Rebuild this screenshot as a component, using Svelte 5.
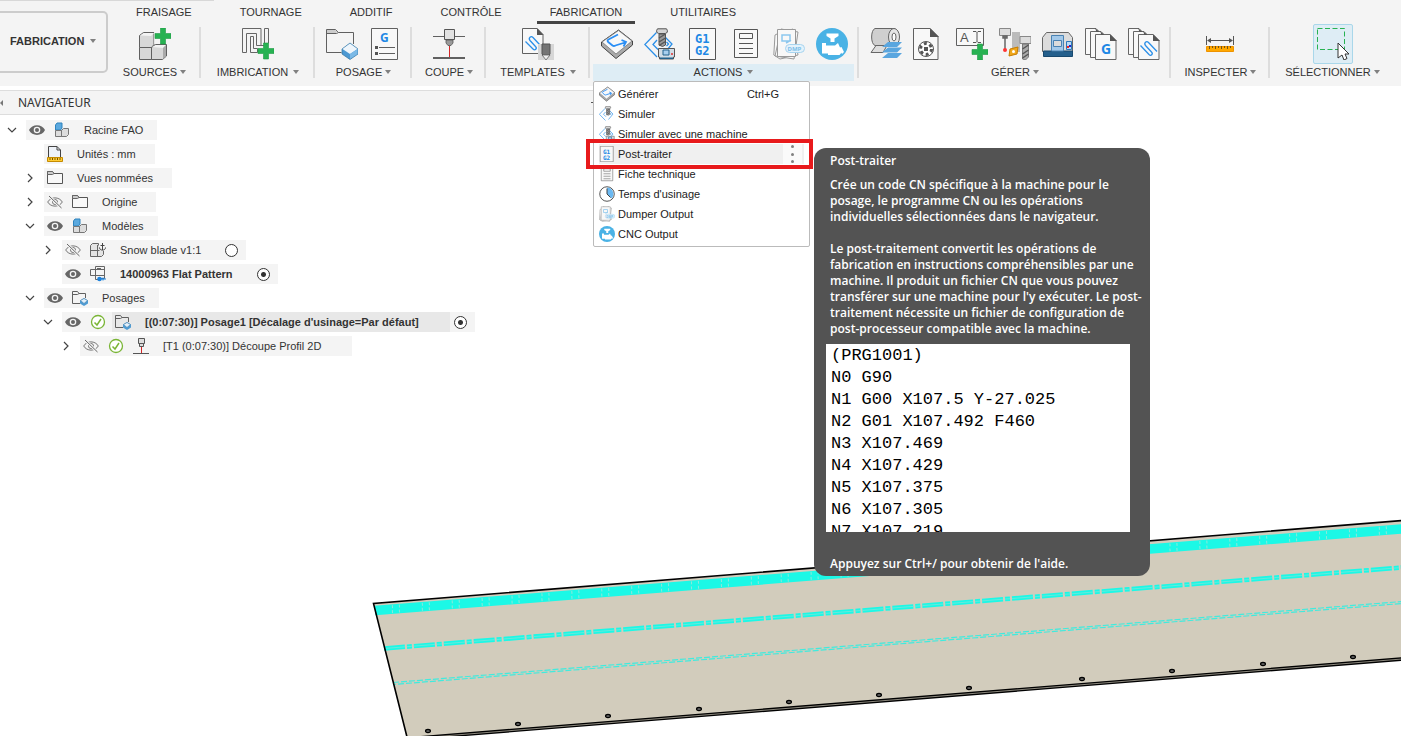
<script>
   let tabs = ['FRAISAGE', 'TOURNAGE', 'ADDITIF', 'CONTRÔLE', 'FABRICATION', 'UTILITAIRES'];
   let activeTab = $state('FABRICATION');

   let panels = [
      { label: 'SOURCES', icons: ['sources'] },
      { label: 'IMBRICATION', icons: ['nesting'], wide: true },
      { label: 'POSAGE', icons: ['setup', 'program'] },
      { label: 'COUPE', icons: ['cut'] },
      { label: 'TEMPLATES', icons: ['template'], wide: true },
      { label: 'ACTIONS', icons: ['generate', 'simulate-machine', 'post', 'sheet', 'dumper', 'cnc'], open: true, wide: true },
      { label: 'GÉRER', icons: ['material', 'wheel', 'rename', 'tools', 'machine', 'stack-g', 'stack-clip'] },
      { label: 'INSPECTER', icons: ['measure'] },
      { label: 'SÉLECTIONNER', icons: ['select'], selected: true }
   ];

   let menuItems = [
      { label: 'Générer', icon: 'generate', shortcut: 'Ctrl+G' },
      { label: 'Simuler', icon: 'simulate' },
      { label: 'Simuler avec une machine', icon: 'simulate-machine' },
      { label: 'Post-traiter', icon: 'post', current: true },
      { label: 'Fiche technique', icon: 'sheet' },
      { label: "Temps d'usinage", icon: 'clock' },
      { label: 'Dumper Output', icon: 'dumper' },
      { label: 'CNC Output', icon: 'cnc' }
   ];

   let rows = [
      { level: 0, chevron: 'down', icons: ['eye', 'model'], label: 'Racine FAO' },
      { level: 1, icons: ['units'], label: 'Unités : mm', roomy: true },
      { level: 1, chevron: 'right', icons: ['folder'], label: 'Vues nommées', roomy: true },
      { level: 1, chevron: 'right', icons: ['eye-off', 'folder'], label: 'Origine', roomy: true },
      { level: 1, chevron: 'down', icons: ['eye', 'model'], label: 'Modèles' },
      { level: 2, chevron: 'right', icons: ['eye-off', 'anchor'], label: 'Snow blade v1:1', radio: 'model' },
      { level: 2, icons: ['eye', 'flat'], label: '14000963 Flat Pattern', bold: true, radio: 'model', checked: true },
      { level: 1, chevron: 'down', icons: ['eye', 'setups'], label: 'Posages' },
      { level: 2, chevron: 'down', icons: ['eye', 'check', 'setups'], label: "[(0:07:30)] Posage1 [Décalage d'usinage=Par défaut]", bold: true, radio: 'setup', checked: true, active: true },
      { level: 3, chevron: 'right', icons: ['eye-off', 'check', 'cut-small'], label: '[T1 (0:07:30)] Découpe Profil 2D' }
   ];

   let code = `(PRG1001)
N0 G90
N1 G00 X107.5 Y-27.025
N2 G01 X107.492 F460
N3 X107.469
N4 X107.429
N5 X107.375
N6 X107.305
N7 X107.219`;

   let description = `Crée un code CN spécifique à la machine pour le
posage, le programme CN ou les opérations
individuelles sélectionnées dans le navigateur.

Le post-traitement convertit les opérations de
fabrication en instructions compréhensibles par une
machine. Il produit un fichier CN que vous pouvez
transférer sur une machine pour l'y exécuter. Le post-
traitement nécessite un fichier de configuration de
post-processeur compatible avec la machine.`;

   let holes = [[428, 731], [518, 724], [608, 716], [699, 709], [789, 702], [879, 695], [969, 688], [1082, 679], [1172, 671], [1263, 664], [1353, 657]];
</script>

{#snippet plus(x, y)}
   <path d="M{x - 2.5} {y - 8}h5v5.5h5.5v5h-5.5V{y + 8}h-5v-5.5H{x - 8}v-5h5.5z" fill="#27b252" stroke="#1e9a45" stroke-width=".6" />
{/snippet}

{#snippet mill()}
   <g stroke="#555" stroke-width="1">
      <path d="M13.5 .8h9l.8 1.5v2l-2 1.2h-6.6l-2-1.2v-2z" fill="#d4d4d4" />
      <path d="M15 6h6.5v11l-3 1.5-3.5-1.5z" fill="#999" />
      <path d="M15 10l6.5-4M15 14l6.5-4M15 17.5l6.5-4" stroke-width="1.4" />
   </g>
{/snippet}

{#snippet sheets()}
   <g fill="#f8f8f8" stroke="#666">
      <path d="M6 26.500H.5V.5H11l4 4" />
      <path d="M11 29.500H5.500V3.500H16l4 4" />
      <path d="M10.500 6.500H25l6 6v19H10.500z" />
      <path d="M10 0l4.500 4h-3zM15 3l4.500 4h-3zM25 6l7 7h-7z" fill="#555" stroke="none" />
   </g>
{/snippet}

{#snippet icon(name, size)}
   <svg width={size} height={size} viewBox="0 0 32 32" fill="none" aria-hidden="true">
      {#if name === 'sources'}
         <g stroke="#606060" fill="#d8d8d8" stroke-linejoin="round">
            <path d="M.5 19.500V7.500l4-3H15v12l-2.500 3z" />
            <path d="M.5 19.500h12v12H.5zM12.500 31.500v-12l4-3H27.500v11.500l-4 3.500z" />
            <path d="M1 7.500l4-2.500h10l-3 3z M13 19l4-2h10l-3 3z" fill="#f3f3f3" stroke="none" />
            <path d="M24 20l3-3v11l-3 3z" fill="#aaa" stroke="none" />
         </g>
         <path d="M15 0h17v16H15z" fill="#f4f4f4" opacity=".8" />
         {@render plus(24, 8)}
      {:else if name === 'nesting'}
         <g stroke="#666">
            <path d="M.5 .5h18.500V17.500h-4.500V5.500h-10v19h-4z" />
            <path d="M8.500 24.500V8.500h3v12h4v4zM22.500 17.500V.5h4V15M19 17.500h3.500" />
         </g>
         {@render plus(24, 23)}
      {:else if name === 'setup'}
         <path d="M.5 24.500V1.500h9l3 3h15V16M.5 5.500h10l2-1M.5 24.500h15" stroke="#606060" />
         <path d="M1 2h8.500l2 2-1.500 1H1z" fill="#ccc" />
         <path d="M16 21l8-6 8 6v5l-8 5.500-8-5.500z" fill="#4b98d2" stroke="#31739f" stroke-width=".7" />
         <path d="M16.500 21l7.500-5.500 7.500 5.500-7.500 5z" fill="#eef5fb" />
         <path d="M24 26v5l7.500-5v-5z" fill="#7bb9e6" />
      {:else if name === 'program'}
         <path d="M2.500 .5h26v31h-26z" fill="#f8f8f8" stroke="#606060" />
         <text x="11" y="14" class="glyph" font-size="12">G</text>
         <path d="M6 18h3v3H6zM6 24h3v3H6z" fill="#555" />
         <path d="M10 19.500h16M10 25.500h16" stroke="#606060" />
      {:else if name === 'cut'}
         <path d="M0 8.500h32" stroke="#606060" />
         <path d="M11.500 1.500h10v10h-10z" fill="#e2e2e2" stroke="#555" />
         <path d="M13 12h7v3l-2 2.500h-3L13 15z" fill="#999" stroke="#555" stroke-width=".8" />
         <path d="M16.500 18v11" stroke="#d32626" />
         <path d="M0 30h32" stroke="#606060" stroke-width="2" />
      {:else if name === 'template'}
         <path d="M.5 .5H15l6 6V25.500H.5z" fill="#f8f8f8" stroke="#606060" />
         <path d="M15 0l6.500 7H15z" fill="#555" />
         <path d="M3.500 13.500l7.500 7.500c2 2 4.500-.5 2.500-2.500L8 12.500c-2-2.500 1-5 3-3l6.500 7" stroke="#2b8fe8" stroke-width="1.300" />
         <path d="M16 16h16v16H16z" fill="#d6d6d6" />
         <path d="M20 16h8v10l-4 5-4-5z" fill="#757575" stroke="#555" />
         <path d="M20 27h8l-4 5z" fill="#eee" stroke="#555" stroke-width=".7" />
      {:else if name === 'generate'}
         <path d="M.5 14L17.500 2l14 11v4L15 30.500.5 18z" fill="#aaa" stroke="#444" stroke-linejoin="round" />
         <path d="M1 14L17.500 2.500 31 13 15 26z" fill="#f8f8f8" stroke="#777" stroke-width=".8" />
         <path d="M17 6.500L7.500 11.500c-1.500 1-1 1.800 0 2.800l4 3.200c1 .8 2 .6 3 0l9.500-3M20.500 12l4.500 2-2.500 4.500" stroke="#2b8ff5" stroke-width="1.800" />
      {:else if name === 'simulate' || name === 'simulate-machine'}
         <path d="M12.500 4.500L.8 16.500 13 29M21 9l7 7-9 11" stroke="#2b8fe8" stroke-width="1.300" />
         <path d="M13 12l-4 4.500 5 5M22.500 14l2 2-2 2" stroke="#2b8fe8" stroke-width="1.300" />
         {@render mill()}
         {#if name === 'simulate-machine'}
            <path d="M14.500 20.500h16v8.500h-1v2h-14v-2h-1z" fill="#d2dde6" stroke="#555" />
            <path d="M19 22h6v5h-6z" fill="#a8cfee" stroke="#23628d" />
            <path d="M16 29.500h13V31H16z" fill="#23628d" />
            <circle cx="28" cy="26" r="1" fill="#e03030" />
         {/if}
      {:else if name === 'post'}
         <path d="M2.500 .5h26v31h-26z" fill="#f8f8f8" stroke="#555" />
         <text x="8" y="15" class="glyph mono" font-size="12">G1</text>
         <text x="8" y="27" class="glyph mono" font-size="12">G2</text>
      {:else if name === 'sheet'}
         <path d="M4.500 1.500h23v28h-23z" fill="#f8f8f8" stroke="#555" />
         <path d="M9.500 5.500h13v5h-13zM9 15.500h14M9 20.500h14M9 25.500h14" stroke="#555" />
      {:else if name === 'dumper'}
         <g fill="#f8f8f8" stroke="#999">
            <path d="M2 7l3-1.500L20 1l5 26L7 31 .8 27z" />
            <path d="M8 1l17 3-4 27-19-3z" />
            <path d="M4.500 1.500h18v27h-18z" />
         </g>
         <path d="M9 7h8v6H9zM13 15l5-3" stroke="#8cc7ee" stroke-width="1.500" />
         <rect x="12.500" y="16.500" width="19" height="8" rx="4" fill="#e4f2fb" stroke="#a7d4ef" />
         <text x="14.500" y="23" class="glyph pale" font-size="6">DMP</text>
      {:else if name === 'cnc'}
         <circle cx="16" cy="16" r="16" fill="#49b2e5" />
         <path d="M10.500 5.500h12V8L18.500 10.500v3.500h-4v-3.500L10.500 8z" fill="#fff" />
         <path d="M6 15h4v2.500h9l3-2.500 4 9-2.500 3H12v-1.500H6z" fill="#fff" />
         <path d="M22.500 20l3-1 2.500 5-2 2z" fill="#fff" />
      {:else if name === 'clock'}
         <circle cx="16" cy="16" r="14.500" fill="#fff" stroke="#555" stroke-width="2" />
         <path d="M16 3a13 13 0 0 1 9 22l-9-9z" fill="#6bb9f2" />
         <path d="M16 5v11l7 7" stroke="#444" stroke-width="2" />
      {:else if name === 'material'}
         <path d="M5 .5h20v17H5C.5 16 .5 2 5 .5z" fill="#cfcfcf" stroke="#666" />
         <ellipse cx="24" cy="9" rx="5.500" ry="8.500" fill="#e6e6e6" stroke="#666" />
         <ellipse cx="24" cy="9" rx="2" ry="4" fill="#fff" stroke="#666" />
         <path d="M6 17.500L1 24.500h12l4-7z" fill="#ddd" stroke="#666" />
         <path d="M18 14h14l-5 5H12zM18 19.500h14l-5 5H12zM18 25h14l-5 5H12z" fill="#5aa6df" />
      {:else if name === 'wheel'}
         <path d="M.5 .5H17l8 8v23H.5z" fill="#f8f8f8" stroke="#606060" />
         <path d="M17 0l9 9h-9z" fill="#555" />
         <circle cx="13" cy="21" r="7.500" fill="#fff" stroke="#555" />
         <circle cx="13" cy="21" r="5.500" stroke="#555" stroke-width="3" stroke-dasharray="3 2.760" />
         <path d="M11 19h4v4h-4z" fill="#555" />
      {:else if name === 'rename'}
         <path d="M.5 .5h27v17H.5z" fill="#f8f8f8" stroke="#606060" />
         <text x="4" y="14" class="letter" font-size="13">A</text>
         <path d="M17 3.500h3l1 1 1-1h3M21 4.500v9M17 14.500h3l1-1 1 1h3" stroke="#555" />
         {@render plus(24, 24)}
      {:else if name === 'tools'}
         <path d="M13 4h8v20h-8z" fill="#bbb" />
         <path d="M.5 .5h11v7H.5zM21 8.500h11v7H21z" fill="#ddd" stroke="#888" />
         <path d="M4 8h4v2H4zM6 9v12" fill="#777" stroke="#666" stroke-width="1.500" />
         <circle cx="6" cy="22" r="2" fill="#f33" />
         <path d="M11 21l8-2-1 7-8 2z" fill="#f0a81c" stroke="#c67c00" />
         <circle cx="14.500" cy="23.500" r="1.500" fill="#fff" />
         <path d="M23.500 16h6v13l-3 3-3-1z" fill="#aaa" stroke="#666" stroke-width=".8" />
         <path d="M23.500 21l6-4M23.500 26l6-4M23.500 30l6-4" stroke="#555" stroke-width="1.500" />
      {:else if name === 'machine'}
         <path d="M.5 23.500v-14l4-5h22l4 5v14z" fill="#dcdcdc" stroke="#666" />
         <path d="M1.500 23h29v5.500h-29z" fill="#245f8c" stroke="#17486e" />
         <path d="M9.500 7.500h12V23h-12z" fill="#a3c9ea" stroke="#4a82b2" />
         <path d="M11.500 12.500h8v6h-8z" fill="#dcdcdc" stroke="#4a82b2" />
         <path d="M24.500 13.500h5v8h-5z" fill="#b9dbf4" stroke="#2c79bc" />
         <path d="M25 18h2v2h-2z" fill="#e22" />
         <path d="M27 17h2v2h-2z" fill="#22c" />
      {:else if name === 'stack-g'}
         {@render sheets()}
         <text x="16" y="26" class="glyph" font-size="14">G</text>
      {:else if name === 'stack-clip'}
         {@render sheets()}
         <path d="M12.500 17.500l8.500 9c2 2 4.500-.5 2.500-2.500l-6-6.500c-2-2.500 1-5 3-3l8.500 9" stroke="#2b8fe8" stroke-width="1.300" />
      {:else if name === 'measure'}
         <path d="M1.500 8v9M28.500 8v9M3 12.500h24" stroke="#555" />
         <path d="M2 12.500l4-2.500v5zM28 12.500l-4-2.500v5z" fill="#555" />
         <path d="M1.500 18.500h27v5h-27z" fill="#ffa800" stroke="#ee9300" />
         <path d="M4.500 18v3M7.500 18v2M10.500 18v3M13.500 18v2M16.500 18v3M19.500 18v2M22.500 18v3M25.500 18v2" stroke="#725515" />
      {:else if name === 'select'}
         <path d="M.5 .5h27v21H.5z" stroke="#27b252" stroke-dasharray="5 2.500" />
         <path d="M21 15v15l4-3 2 5 3-1.500-2-4.500h4z" fill="#fff" stroke="#333" />
      {/if}
   </svg>
{/snippet}

{#snippet treeIcon(name)}
   <svg width="16" height="16" viewBox="0 0 16 16" fill="none" aria-hidden="true">
      {#if name === 'eye'}
         <path d="M0 8c3-6.500 13-6.500 16 0-3 6.500-13 6.500-16 0z" fill="#666" />
         <circle cx="8" cy="8" r="3.300" fill="#f4f4f4" />
         <circle cx="8" cy="8" r="2" fill="#666" />
      {:else if name === 'eye-off'}
         <path d="M.7 8c3-5.500 11.600-5.500 14.600 0-3 5.500-11.600 5.500-14.600 0z" stroke="#777" />
         <circle cx="8" cy="8" r="2.500" stroke="#777" />
         <path d="M2 2l12.500 12" stroke="#f4f4f4" stroke-width="2.500" />
         <path d="M2 2l12.500 12" stroke="#666" />
      {:else if name === 'model'}
         <path d="M1.500 3l1.500-2h5v5L6.500 8h-5z" fill="#5ba9df" stroke="#2f83bd" />
         <path d="M1.500 8.500h6v6h-6zM7.500 14.500v-6l2-2h5v6l-2 2z" fill="#ddd" stroke="#777" />
      {:else if name === 'units'}
         <path d="M1.500 .5H10L13.500 4v9h-12z" fill="#eef2f8" stroke="#444" />
         <path d="M10 .5V4h3.500" stroke="#444" />
         <path d="M.5 11.500h15v4H.5z" fill="#fc3" stroke="#c58b00" />
         <path d="M3 12v2M5.500 12v2M8 12v2M10.500 12v2M13 12v2" stroke="#765200" />
      {:else if name === 'folder'}
         <path d="M.5 13.500v-12h5l1.500 2h8.500v10z" fill="#f8f8f8" stroke="#555" />
         <path d="M.5 4.500h5l1.500-1-1.500-2h-5z" fill="#ccc" stroke="#666" />
      {:else if name === 'anchor'}
         <path d="M8.500 3.500V1.500h-6l-2 2v11h11l2-2V9M.5 8.500h9M7.500 3v11.500" fill="#e4e4e4" stroke="#666" />
         <path d="M12.500 1v7M10.500 3.500h4M9.500 5.500c0 3.500 6 3.500 6 0" stroke="#444" />
      {:else if name === 'flat'}
         <path d="M5.500 3.500V.5h9v12h-5M5.500 9.500h-5v-6h14M5.500 3.500v10h3M.5 9.500h14" stroke="#666" />
         <path d="M7 2.500h4" stroke="#666" />
         <circle cx="9.500" cy="13" r="2.300" fill="#1d82dc" />
         <path d="M9 13h7M13 11.500v3" stroke="#1d82dc" />
      {:else if name === 'setups'}
         <path d="M.5 13.500v-12h5l1.500 2h6.500V8M.5 4.500h5l1.500-1M.5 13.500H8" stroke="#606060" />
         <path d="M8 10.500l4-2.500 4 2.500v3L12 16l-4-2.500z" fill="#4e9bd3" />
         <path d="M8.500 10.500l3.500-2 3.500 2-3.500 3z" fill="#e4f0fa" stroke="#4e87b0" stroke-width=".7" />
      {:else if name === 'check'}
         <circle cx="8" cy="8" r="6.500" fill="#fff" stroke="#7ab536" stroke-width="1.300" />
         <path d="M4.500 8.500L7 11l4-6" stroke="#7ab536" stroke-width="1.500" />
      {:else if name === 'cut-small'}
         <path d="M5.500 .5h6v5h-6zM6.500 6v2.500h4V6" fill="#ddd" stroke="#555" />
         <path d="M8.500 9v6" stroke="#d32626" />
         <path d="M0 15.500h16" stroke="#555" />
      {/if}
   </svg>
{/snippet}

<div class="app">
   <header class="ribbon">
      <button class="workspace">FABRICATION <span class="caret"></span></button>
      <div class="ribbon-body">
         <nav class="tabs">
            {#each tabs as tab}
               <button class="tab" class:active={tab === activeTab} onclick={() => (activeTab = tab)}>{tab}</button>
            {/each}
         </nav>
         <div class="panels">
            {#each panels as panel}
               <section class="panel" class:open={panel.open}>
                  <div class="tools">
                     {#each panel.icons as name}
                        <button class="tool" class:selected={panel.selected} aria-label={name}>{@render icon(name, 32)}</button>
                     {/each}
                  </div>
                  <button class="panel-label" class:wide={panel.wide}>{panel.label}<span class="caret"></span></button>
                  {#if panel.open}
                     <div class="menu" role="menu">
                        {#each menuItems as item}
                           <div class="menu-row" class:current={item.current}>
                              <button class="menu-item" role="menuitem">
                                 {@render icon(item.icon, 16)}
                                 <span>{item.label}</span>
                                 {#if item.shortcut}<span class="shortcut">{item.shortcut}</span>{/if}
                              </button>
                              {#if item.current}
                                 <button class="more" aria-label="Options"><i></i><i></i><i></i></button>
                                 <div class="marker"></div>
                              {/if}
                           </div>
                        {/each}
                        <aside class="tooltip" role="tooltip">
                           <h2>Post-traiter</h2>
                           <p>{description}</p>
                           <pre>{code}</pre>
                           <p>Appuyez sur Ctrl+/ pour obtenir de l'aide.</p>
                        </aside>
                     </div>
                  {/if}
               </section>
            {/each}
         </div>
      </div>
   </header>

   <main class="viewport">
      <svg class="plate" viewBox="0 86 1401 650" preserveAspectRatio="xMaxYMin slice" aria-hidden="true">
         <path d="M374 603.500L1402 521V659L407 739z" fill="#d2ccbc" />
         <path d="M375 610.500L1402 529" stroke="#1cf8e6" stroke-width="9.500" />
         <path d="M375 608L1402 526.500M375 613L1402 531.500" stroke="#8fe6d8" stroke-width="3" stroke-dasharray="1 6 1 22" stroke-dashoffset="13" />
         <path d="M384 648.500L1402 567.500" stroke="#1cf8e6" stroke-width="4.500" stroke-dasharray="21 2 5 2" />
         <path d="M384 648.500L1402 567.500" stroke="#7be5d8" stroke-width=".8" stroke-dasharray="21 2 5 2" />
         <path d="M393 682.500L1402 601.500" stroke="#40ebde" stroke-width="1.200" stroke-dasharray="6 2" />
         <path d="M393 684.500L1402 603.500" stroke="#40ebde" stroke-width="1.200" stroke-dasharray="6 2" stroke-dashoffset="3" />
         <path d="M1402 520.500L373.500 603.500L407.500 739" stroke="#000" stroke-width="1.600" fill="none" />
         <path d="M406 739L1402 659" stroke="#000" stroke-width="3.600" />
         <path d="M406 739L1402 659" stroke="#8c887d" stroke-width="1" />
         {#each holes as [x, y]}
            <ellipse cx={x} cy={y} rx="2.400" ry="1.500" fill="#777" stroke="#000" stroke-width="1.300" />
         {/each}
      </svg>

      <div class="browser">
         <div class="browser-title">
            <span class="collapse"></span>
            <h1>NAVIGATEUR</h1>
            <button class="minimize" aria-label="Réduire"></button>
         </div>
         <ul class="tree">
            {#each rows as row}
               <li class="row level-{row.level}">
                  {#if row.chevron}
                     <button class="chevron" aria-label="Développer">
                        <svg width="10" height="10" viewBox="0 0 10 10" fill="none">
                           <path d={row.chevron === 'down' ? 'M1 3l4 4 4-4' : 'M3 1l4 4-4 4'} stroke="#444" stroke-width="1.200" />
                        </svg>
                     </button>
                  {:else}
                     <span class="chevron"></span>
                  {/if}
                  <div class="node" class:bold={row.bold} class:active={row.active} class:roomy={row.roomy}>
                     {#each row.icons as name}
                        <span class="slot">{@render treeIcon(name)}</span>
                     {/each}
                     {#if row.radio}
                        <label for="radio-{row.label}" class="name">{row.label}</label>
                        <input type="radio" id="radio-{row.label}" name={row.radio} checked={row.checked} />
                     {:else}
                        <span class="name">{row.label}</span>
                     {/if}
                  </div>
               </li>
            {/each}
         </ul>
      </div>
   </main>
</div>

<style>
   :global(body) {
      background: #fff;
   }
   .app {
      min-height: 100vh;
      display: flex;
      flex-direction: column;
      overflow: hidden;
      font-family: 'Liberation Sans', Arial, sans-serif;
      font-size: 11px;
      color: #333;
   }
   button {
      border: 0;
      padding: 0;
      background: none;
      font: inherit;
      color: inherit;
      white-space: nowrap;
   }
   svg {
      display: block;
   }
   .caret {
      border: 3px solid transparent;
      border-top: 4px solid #808080;
      border-bottom: 0;
   }

   /* ribbon */
   .ribbon {
      display: flex;
      height: 86px;
      background: #f4f4f4;
      position: relative;
      z-index: 2;
   }
   .ribbon::before {
      content: '';
      position: absolute;
      width: 214px;
      height: 1px;
      background: #d8d8d8;
   }
   .workspace {
      display: flex;
      align-items: center;
      gap: 6px;
      width: 108px;
      height: 62px;
      margin-top: 11px;
      padding: 0 0 2px 10px;
      border: 2px solid #ccc;
      border-left: 0;
      border-radius: 0 5px 5px 0;
      box-sizing: border-box;
      font-weight: bold;
   }
   .ribbon-body {
      flex: 1;
   }
   .tabs {
      display: flex;
      gap: 22px;
      height: 24px;
      padding-left: 15px;
   }
   .tab {
      padding: 2px 13px 0;
      border-bottom: 3px solid transparent;
   }
   .tab.active {
      border-bottom-color: #444;
   }
   .panels {
      display: grid;
      grid-template-columns: 93px 114px 97px 74px 104px 269px 312px 99px 125px;
   }
   .panel {
      position: relative;
      height: 57px;
   }
   .panel:not(:last-child)::after {
      content: '';
      position: absolute;
      right: 0;
      top: 3px;
      width: 2px;
      height: 51px;
      background: #ddd;
   }
   .tools {
      display: flex;
      justify-content: center;
      align-items: center;
      gap: 11px;
      height: 40px;
   }
   .tool.selected {
      padding: 3px;
      border: 1px solid #a9d7ea;
      border-radius: 2px;
      background: #deedf5;
   }
   .panel-label {
      display: flex;
      align-items: center;
      justify-content: center;
      gap: 3px;
      width: 100%;
      height: 17px;
      padding-bottom: 2px;
   }
   .panel-label.wide {
      gap: 5px;
   }
   .open .panel-label {
      width: calc(100% - 8px);
      margin: 0 5px 0 3px;
      background: #deedf5;
   }

   /* actions menu */
   .menu {
      position: absolute;
      left: 3px;
      top: 57px;
      width: 217px;
      box-sizing: border-box;
      padding: 2px 5px;
      border: 1px solid #bbb;
      border-radius: 2px;
      background: #fff;
      z-index: 3;
   }
   .menu-row {
      display: flex;
      height: 20px;
      position: relative;
   }
   .menu-row.current {
      background: #f0f0f0;
      z-index: 1;
   }
   .menu-item {
      flex: 1;
      display: flex;
      align-items: center;
      gap: 3px;
      text-align: left;
      color: #222;
   }
   .shortcut {
      margin-left: auto;
      margin-right: 25px;
   }
   .more {
      display: flex;
      flex-direction: column;
      align-items: center;
      justify-content: space-between;
      width: 19px;
      margin-right: 2px;
      padding: 1px 0;
      background: #fafafa;
   }
   .more i {
      width: 3px;
      height: 3px;
      border-radius: 50%;
      background: #808080;
   }
   .marker {
      position: absolute;
      inset: -5px -9px -5px -13px;
      border: 4px solid #e81a1c;
      pointer-events: none;
   }
   .tooltip {
      position: absolute;
      left: 220px;
      top: 66px;
      width: 336px;
      box-sizing: border-box;
      padding: 5px 20px 4px 12px;
      border-radius: 12px;
      background: #535353;
      color: #fff;
      font-family: 'Open Sans', 'Noto Sans', sans-serif;
      font-size: 12px;
      font-weight: 600;
      line-height: 16px;
   }
   .tooltip h2 {
      margin: 0 4px 8px;
      font-size: inherit;
      font-weight: inherit;
   }
   .tooltip p {
      margin: 0 4px;
      white-space: pre;
   }
   .tooltip pre {
      height: 188px;
      box-sizing: border-box;
      margin: 7px 0 24px;
      padding: 1px 5px 0;
      overflow: hidden;
      background: #fff;
      color: #000;
      font-family: 'Liberation Mono', monospace;
      font-size: 17px;
      font-weight: normal;
      line-height: 22px;
   }

   /* drawing area */
   .viewport {
      flex: 1;
      position: relative;
      padding-top: 4px;
   }
   .plate {
      position: absolute;
      inset: 0;
      width: 100%;
      height: 100%;
   }
   .glyph {
      font-family: 'Noto Sans', sans-serif;
      font-weight: bold;
      fill: #1e88e5;
   }
   .mono {
      font-family: 'DejaVu Sans Mono', monospace;
   }
   .pale {
      fill: #7cc0ea;
   }
   .letter {
      font-family: 'Liberation Sans', sans-serif;
      fill: #555;
   }

   /* browser tree */
   .browser {
      position: relative;
      width: 43%;
   }
   .browser-title {
      display: flex;
      align-items: center;
      height: 25px;
      box-sizing: border-box;
      border-top: 1px solid #ddd;
      border-bottom: 1px solid #ddd;
      background: #f4f4f4;
   }
   .collapse {
      width: 0;
      border: 3px solid transparent;
      border-right-color: #777;
      border-left: 0;
   }
   h1 {
      flex: 1;
      margin: 0 0 0 15px;
      font-family: 'Noto Sans', sans-serif;
      font-size: 12px;
      font-weight: normal;
   }
   .minimize {
      width: 11px;
      height: 1px;
      background: #555;
   }
   .tree {
      display: flex;
      flex-direction: column;
      gap: 4px;
      margin: 5px 0 0;
      padding: 0;
      list-style: none;
   }
   .row {
      display: flex;
      height: 20px;
   }
   .level-1 {
      padding-left: 18px;
   }
   .level-2 {
      padding-left: 36px;
   }
   .level-3 {
      padding-left: 54px;
   }
   .chevron {
      display: flex;
      align-items: center;
      width: 26px;
      padding-left: 7px;
      box-sizing: border-box;
   }
   .node {
      display: flex;
      align-items: center;
      gap: 3px;
      background: #f4f4f4;
   }
   .slot {
      display: flex;
      justify-content: center;
      width: 22px;
   }
   .name {
      padding: 0 14px 0 8px;
      line-height: 20px;
      white-space: nowrap;
   }
   .roomy .name {
      padding-right: 19px;
   }
   .level-3 .name {
      padding-right: 31px;
   }
   .bold .name {
      font-weight: bold;
   }
   input {
      appearance: none;
      width: 13px;
      height: 13px;
      margin: 0 8px 0 7px;
      border: 1px solid #333;
      border-radius: 50%;
      background: #fff;
   }
   input:checked {
      background: radial-gradient(circle, #333 2px, #fff 3px);
   }
   .active .slot:nth-child(3) {
      align-items: center;
      height: 20px;
      margin-right: -3px;
      padding-right: 3px;
      background: #e8e8e8;
   }
   .active .name {
      padding-right: 31px;
      background: #e8e8e8;
   }
   .active input {
      margin-left: 1px;
   }
</style>
